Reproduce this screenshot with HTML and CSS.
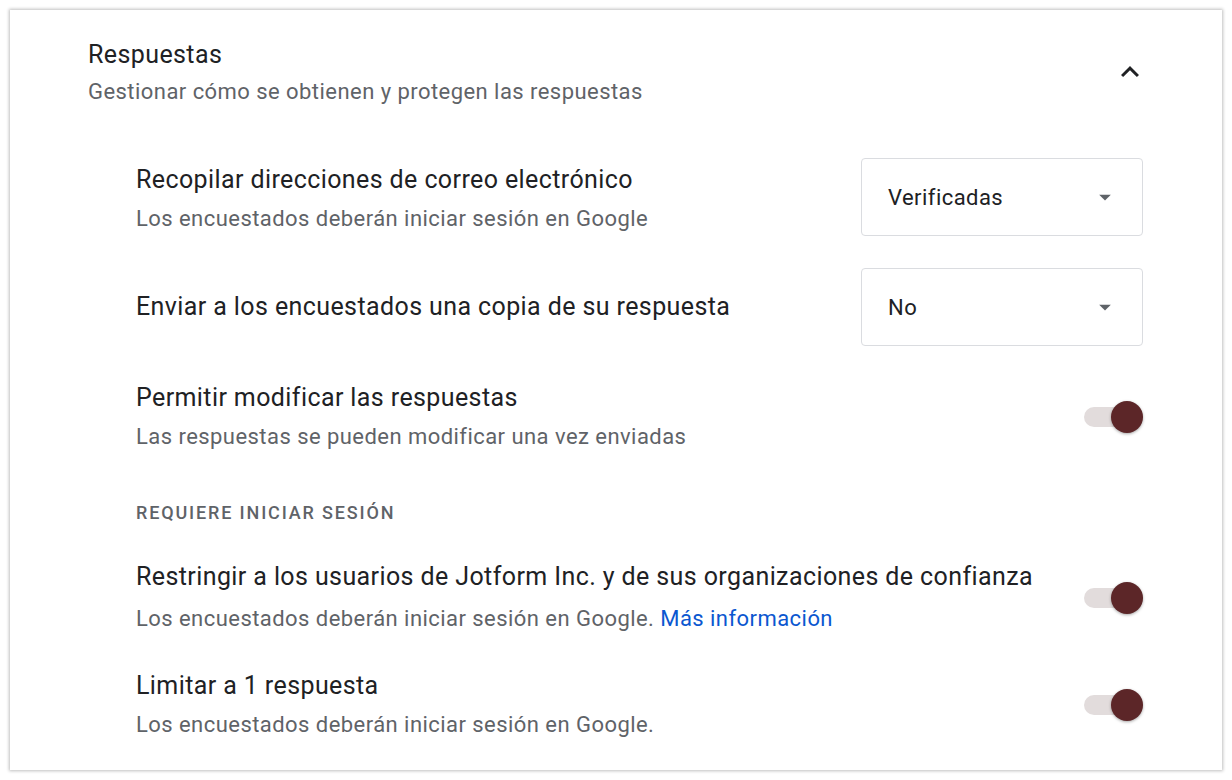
FILE: index.html
```html
<!DOCTYPE html>
<html lang="es">
<head>
    <meta charset="UTF-8" />
    <title>Respuestas</title>
    <link rel="stylesheet" href="styles.css">
</head>
<body>
    <div class="card">
        <div class="card-head">
            <div>
                <h2 class="card-title">Respuestas</h2>
                <div class="card-sub">Gestionar cómo se obtienen y protegen las respuestas</div>
            </div>
            <svg class="chevron" width="36" height="36" viewBox="0 0 24 24">
                <path d="M12 8l-6 6 1.41 1.41L12 10.83l4.59 4.58L18 14z" fill="#202124"/>
            </svg>
        </div>

        <div class="settings">
            <div class="row">
                <div class="row-text first">
                    <div class="row-title">Recopilar direcciones de correo electrónico</div>
                    <div class="row-sub">Los encuestados deberán iniciar sesión en Google</div>
                </div>
                <div class="select">
                    <span>Verificadas</span>
                    <svg width="28" height="28" viewBox="0 0 24 24"><path d="M7 10l5 5 5-5z" fill="#5f6368"/></svg>
                </div>
            </div>

            <div class="row">
                <div class="row-text">
                    <div class="row-title">Enviar a los encuestados una copia de su respuesta</div>
                </div>
                <div class="select">
                    <span>No</span>
                    <svg width="28" height="28" viewBox="0 0 24 24"><path d="M7 10l5 5 5-5z" fill="#5f6368"/></svg>
                </div>
            </div>

            <div class="row">
                <div class="row-text">
                    <div class="row-title">Permitir modificar las respuestas</div>
                    <div class="row-sub">Las respuestas se pueden modificar una vez enviadas</div>
                </div>
                <div class="toggle on"><div class="knob"></div></div>
            </div>

            <div class="group-label">REQUIERE INICIAR SESIÓN</div>

            <div class="row row-small">
                <div class="row-text">
                    <div class="row-title">Restringir a los usuarios de Jotform Inc. y de sus organizaciones de confianza</div>
                    <div class="row-sub wide">Los encuestados deberán iniciar sesión en Google. <a href="#">Más información</a></div>
                </div>
                <div class="toggle on"><div class="knob"></div></div>
            </div>

            <div class="row row-small">
                <div class="row-text">
                    <div class="row-title">Limitar a 1 respuesta</div>
                    <div class="row-sub">Los encuestados deberán iniciar sesión en Google.</div>
                </div>
                <div class="toggle on"><div class="knob"></div></div>
            </div>
        </div>
    </div>
</body>
</html>
```

FILE: styles.css
```css
body {
    margin: 0;
    background: #fff;
    font-family: Roboto, "Noto Sans", sans-serif;
    color: #202124;
}

.card {
    margin: 10px;
    height: 760px;
    box-sizing: border-box;
    background: #fff;
    box-shadow: 0 0 3px 1px rgba(0,0,0,0.25);
    padding: 29px 79px 0 78px;
    overflow: hidden;
}

.card-head {
    display: flex;
    justify-content: space-between;
    align-items: center;
}

.card-title {
    margin: 0;
    font-size: 25px;
    font-weight: 400;
    letter-spacing: 0.4px;
    line-height: 32px;
}

.card-sub {
    font-size: 22px;
    letter-spacing: 0.45px;
    line-height: 28px;
    color: #5f6368;
    margin-top: 7px;
}

.chevron {
    margin-right: -5px;
    margin-bottom: 2px;
}

.settings {
    padding: 36px 0 0 48px;
}

.row {
    display: flex;
    justify-content: space-between;
    align-items: center;
    min-height: 78px;
    padding: 16px 0;
}

.row-small {
    padding: 14.5px 0;
}

.row-text.first {
    margin-top: 4px;
}

.row-title {
    font-size: 25px;
    letter-spacing: 0.4px;
    line-height: 30px;
}

.row-sub {
    font-size: 22px;
    letter-spacing: 0.45px;
    line-height: 28px;
    color: #5f6368;
    margin-top: 10px;
}

.row-sub.wide {
    margin-top: 13px;
}

.row-sub a {
    color: #0b57d0;
    text-decoration: none;
}

.select {
    width: 282px;
    height: 78px;
    box-sizing: border-box;
    border: 1px solid #dadce0;
    border-radius: 4px;
    display: flex;
    align-items: center;
    justify-content: space-between;
    padding: 0 23px 0 26px;
    font-size: 22px;
    letter-spacing: 0.45px;
}

.toggle {
    position: relative;
    width: 44px;
    height: 20px;
    border-radius: 10px;
    background: #e2dcdc;
    margin-right: 15px;
}

.knob {
    position: absolute;
    top: -6px;
    right: -15px;
    width: 32px;
    height: 32px;
    border-radius: 50%;
    background: #5c2628;
    box-shadow: 0 1px 3px rgba(0,0,0,0.35);
}

.group-label {
    font-size: 18px;
    font-weight: 500;
    letter-spacing: 1.85px;
    line-height: 22px;
    color: #5f6368;
    padding: 30px 0 20px;
}
```
